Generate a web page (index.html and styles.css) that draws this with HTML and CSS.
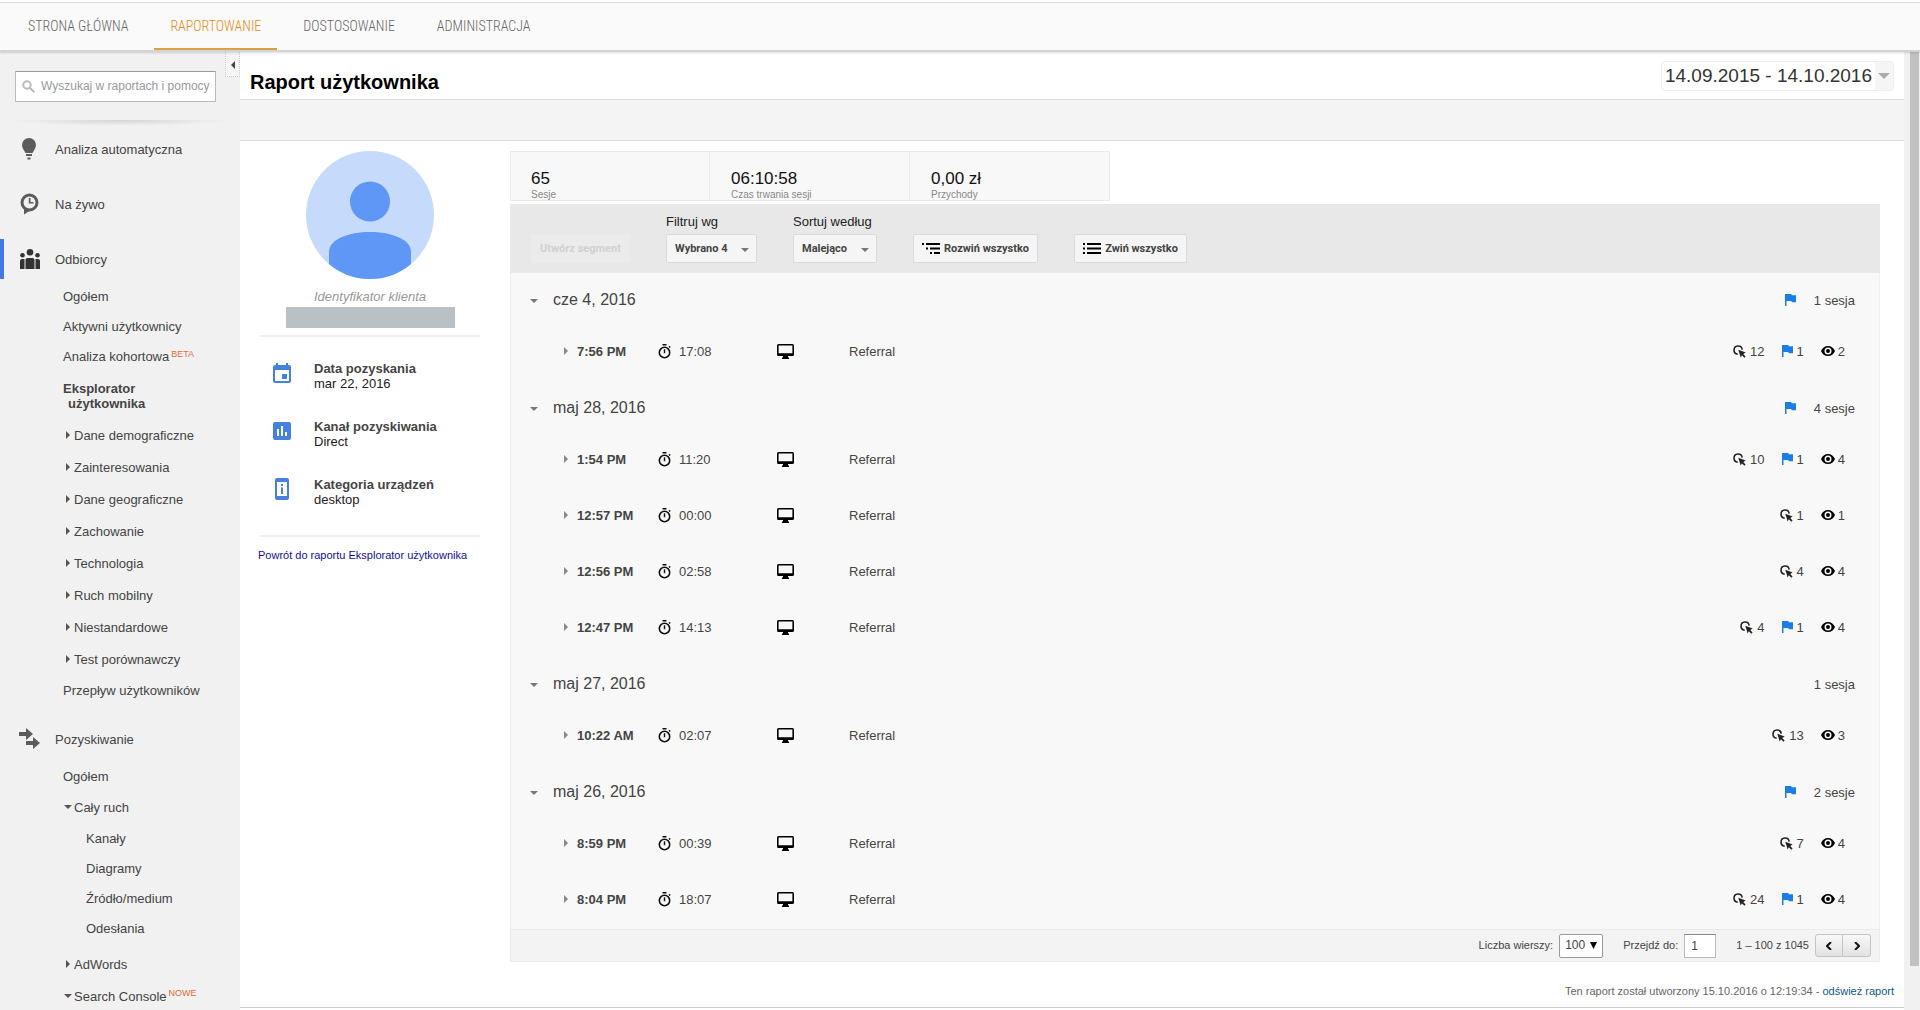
FILE: index.html
```html
<!DOCTYPE html>
<html lang="pl">
<head>
<meta charset="utf-8">
<title>Raport użytkownika</title>
<link rel="stylesheet" href="styles.css">
</head>
<body>
<svg class="sprite" aria-hidden="true">
  <symbol id="right" viewBox="0 0 4 8"><path d="M0 0l4 4-4 4z"/></symbol>
  <symbol id="down" viewBox="0 0 8 4"><path d="M0 0h8L4 4z"/></symbol>
  <symbol id="watch" viewBox="0 0 13 15"><path d="M4.500 0h4v1.500h-4z"/><circle cx="6.500" cy="8.500" r="5.200" fill="none" stroke="currentColor" stroke-width="1.600"/><path d="M5.800 5.200h1.400v4H5.800zM10.500 2.700l1-1 1.200 1.200-1 1z"/></symbol>
  <symbol id="monitor" viewBox="0 0 17 15"><path d="M1.500 0h14A1.500 1.500 0 0 1 17 1.500v9a1.500 1.500 0 0 1-1.500 1.500H11v1.500h1V15H5v-1.500h1V12H1.500A1.500 1.500 0 0 1 0 10.500v-9A1.500 1.500 0 0 1 1.500 0zm.1 1.500v7.700h13.800V1.500z" fill-rule="evenodd"/></symbol>
  <symbol id="click" viewBox="0 0 13 13"><path d="M4.700 9.200A4.100 4.100 0 1 1 9.200 4.600" fill="none" stroke="currentColor" stroke-width="1.600"/><path d="M5.300 4.800l7.400 2.700-2.500 1.400 2.400 2.600-1.200 1.200-2.500-2.500-1.200 2.400z"/></symbol>
  <symbol id="flag" viewBox="0 0 11 12"><path d="M0 0h6.300l.4 1.300H11v7H6.700L6.300 7H1.500v5H0z"/></symbol>
  <symbol id="eye" viewBox="0 0 14 10"><path d="M7 0c3.200 0 5.900 2 7 5-1.100 3-3.800 5-7 5S1.100 8 0 5c1.100-3 3.800-5 7-5zm0 1.500a3.500 3.500 0 1 0 0 7 3.500 3.500 0 0 0 0-7zM7 3a2 2 0 1 1 0 4 2 2 0 0 1 0-4z" fill-rule="evenodd"/></symbol>
</svg>

<header class="topbar">
  <nav class="tabs">
    <a href="#" class="tab">STRONA GŁÓWNA</a>
    <a href="#" class="tab tab-active">RAPORTOWANIE</a>
    <a href="#" class="tab">DOSTOSOWANIE</a>
    <a href="#" class="tab">ADMINISTRACJA</a>
  </nav>
</header>

<div class="app">
  <aside class="sidebar">
    <button class="collapse" aria-label="Zwiń menu"><svg width="4" height="8" viewBox="0 0 4 8"><path d="M4 0v8L0 4z"/></svg></button>
    <label class="search">
      <svg class="lens" width="13" height="13" viewBox="0 0 13 13"><circle cx="5" cy="5" r="3.700"/><path d="M8 8l4.300 4.300"/></svg>
      <input type="text" placeholder="Wyszukaj w raportach i pomocy" aria-label="Wyszukaj">
    </label>
    <div class="divider"></div>
    <nav class="menu">
      <a href="#" class="section"><svg width="28" height="22" viewBox="0 0 28 22"><path d="M14 0a7 7 0 0 1 7 7c0 3-2 5-3.500 8h-7C9 12 7 10 7 7a7 7 0 0 1 7-7zM11 16h6v2h-6zM12.500 19.500h3v2h-3z"/></svg>Analiza automatyczna</a>
      <a href="#" class="section"><svg width="28" height="22" viewBox="0 0 28 22"><circle cx="14.500" cy="9.500" r="7.500" fill="none" stroke="currentColor" stroke-width="3"/><path d="M9 15v6.500l7-4.500zM13.800 5h1.700v4h3v1.500h-4.700z"/></svg>Na żywo</a>
      <a href="#" class="section section-active"><svg width="28" height="20" viewBox="0 0 28 20"><circle cx="15" cy="3.300" r="3.300"/><circle cx="7.500" cy="6.200" r="2.300"/><circle cx="22.500" cy="6.200" r="2.300"/><path d="M10.500 20v-9q0-2 2-2h5q2 0 2 2v9zM5 20v-8q0-2 2-2h2.500v10zM20.500 20V10H23q2 0 2 2v8z"/></svg>Odbiorcy</a>
      <ul class="items">
        <li><a href="#">Ogółem</a></li>
        <li><a href="#">Aktywni użytkownicy</a></li>
        <li><a href="#">Analiza kohortowa<sup>BETA</sup></a></li>
        <li class="current"><a href="#">Eksplorator użytkownika</a></li>
        <li class="group"><a href="#"><svg class="arrow-right"><use href="#right"/></svg>Dane demograficzne</a></li>
        <li class="group"><a href="#"><svg class="arrow-right"><use href="#right"/></svg>Zainteresowania</a></li>
        <li class="group"><a href="#"><svg class="arrow-right"><use href="#right"/></svg>Dane geograficzne</a></li>
        <li class="group"><a href="#"><svg class="arrow-right"><use href="#right"/></svg>Zachowanie</a></li>
        <li class="group"><a href="#"><svg class="arrow-right"><use href="#right"/></svg>Technologia</a></li>
        <li class="group"><a href="#"><svg class="arrow-right"><use href="#right"/></svg>Ruch mobilny</a></li>
        <li class="group"><a href="#"><svg class="arrow-right"><use href="#right"/></svg>Niestandardowe</a></li>
        <li class="group"><a href="#"><svg class="arrow-right"><use href="#right"/></svg>Test porównawczy</a></li>
        <li><a href="#">Przepływ użytkowników</a></li>
      </ul>
      <a href="#" class="section"><svg width="28" height="22" viewBox="0 0 28 22"><path d="M4 4h7V0l7 6-7 6V8H4zM11 13h7V9l7 6-7 6v-4h-7z"/></svg>Pozyskiwanie</a>
      <ul class="items">
        <li><a href="#">Ogółem</a></li>
        <li class="group"><a href="#"><svg class="arrow-down"><use href="#down"/></svg>Cały ruch</a>
          <ul class="nest">
            <li><a href="#">Kanały</a></li>
            <li><a href="#">Diagramy</a></li>
            <li><a href="#">Źródło/medium</a></li>
            <li><a href="#">Odesłania</a></li>
          </ul>
        </li>
        <li class="group"><a href="#"><svg class="arrow-right"><use href="#right"/></svg>AdWords</a></li>
        <li class="group"><a href="#"><svg class="arrow-down"><use href="#down"/></svg>Search Console<sup>NOWE</sup></a></li>
      </ul>
    </nav>
  </aside>

  <main class="main">
    <div class="titlebar">
      <h1>Raport użytkownika</h1>
      <button class="daterange"><span>14.09.2015 - 14.10.2016</span><span class="datecaret"><svg width="12" height="6"><use href="#down"/></svg></span></button>
    </div>
    <div class="band"></div>

    <div class="report">
      <section class="profile">
        <svg class="avatar" viewBox="0 0 128 128"><defs><clipPath id="disc"><circle cx="64" cy="64" r="64"/></clipPath></defs><g clip-path="url(#disc)"><path fill="#c6dafc" d="M0 0h128v128H0z"/><circle cx="64" cy="50.500" r="20" fill="#5e97f6"/><path fill="#5e97f6" d="M23 128V101c0-13 20-20 41-20s41 7 41 20v27z"/></g></svg>
        <p class="client">Identyfikator klienta</p>
        <div class="redacted"></div>
        <dl class="facts">
          <div class="fact"><svg width="18" height="20" viewBox="0 0 18 20"><path fill-rule="evenodd" d="M3 0h2v2h8V0h2v2h1a2 2 0 0 1 2 2v14a2 2 0 0 1-2 2H2a2 2 0 0 1-2-2V4a2 2 0 0 1 2-2h1zM2 7v11h14V7zm7 4h5v5H9z"/></svg><div><dt>Data pozyskania</dt><dd>mar 22, 2016</dd></div></div>
          <div class="fact"><svg width="18" height="20" viewBox="0 0 18 20"><path fill-rule="evenodd" d="M2 1h14a2 2 0 0 1 2 2v14a2 2 0 0 1-2 2H2a2 2 0 0 1-2-2V3a2 2 0 0 1 2-2zm2 7v7h2V8zm4-3v10h2V5zm4 6v4h2v-4z"/></svg><div><dt>Kanał pozyskiwania</dt><dd>Direct</dd></div></div>
          <div class="fact"><svg width="18" height="22" viewBox="0 0 18 22"><path fill-rule="evenodd" d="M4 0h10a2 2 0 0 1 2 2v18a2 2 0 0 1-2 2H4a2 2 0 0 1-2-2V2a2 2 0 0 1 2-2zm0 4v14h10V4zm4 2h2v2H8zm0 3.500h2V16H8z"/></svg><div><dt>Kategoria urządzeń</dt><dd>desktop</dd></div></div>
        </dl>
        <a href="#" class="back">Powrót do raportu Eksplorator użytkownika</a>
      </section>

      <section class="activity">
        <div class="cards">
          <div class="card"><b>65</b><span>Sesje</span></div>
          <div class="card"><b>06:10:58</b><span>Czas trwania sesji</span></div>
          <div class="card"><b>0,00 zł</b><span>Przychody</span></div>
        </div>
        <div class="toolbar">
          <button class="btn segment" disabled>Utwórz segment</button>
          <div class="field filter"><label for="filter">Filtruj wg</label><div class="pick"><select id="filter"><option>Wybrano 4</option></select><svg width="8" height="4"><use href="#down"/></svg></div></div>
          <div class="field sort"><label for="sort">Sortuj według</label><div class="pick"><select id="sort"><option>Malejąco</option></select><svg width="8" height="4"><use href="#down"/></svg></div></div>
          <button class="btn expand"><svg width="18" height="11" viewBox="0 0 18 11"><path d="M0 0h2v2H0zM4 0h14v2H4zM4 4.500h2v2H4zM8 4.500h10v2H8zM8 9h2v2H8zM12 9h6v2h-6z"/></svg>Rozwiń wszystko</button>
          <button class="btn fold"><svg width="18" height="11" viewBox="0 0 18 11"><path d="M0 0h2v2H0zM4 0h14v2H4zM0 4.500h2v2H0zM4 4.500h14v2H4zM0 9h2v2H0zM4 9h14v2H4z"/></svg>Zwiń wszystko</button>
        </div>
        <table class="sessions">
          <colgroup><col class="c-time"><col class="c-length"><col class="c-device"><col class="c-channel"><col></colgroup>
          <tbody>
            <tr class="day"><th colspan="4"><svg class="arrow-down"><use href="#down"/></svg>cze 4, 2016</th><td><div class="count"><svg class="flag"><use href="#flag"/></svg>1 sesja</div></td></tr>
            <tr><th><svg class="arrow-right"><use href="#right"/></svg>7:56 PM</th><td><div class="length"><svg class="watch"><use href="#watch"/></svg>17:08</div></td><td><svg class="monitor"><use href="#monitor"/></svg></td><td>Referral</td><td><div class="stats"><span><svg class="click"><use href="#click"/></svg>12</span><span><svg class="flag"><use href="#flag"/></svg>1</span><span><svg class="eye"><use href="#eye"/></svg>2</span></div></td></tr>
          </tbody>
          <tbody>
            <tr class="day"><th colspan="4"><svg class="arrow-down"><use href="#down"/></svg>maj 28, 2016</th><td><div class="count"><svg class="flag"><use href="#flag"/></svg>4 sesje</div></td></tr>
            <tr><th><svg class="arrow-right"><use href="#right"/></svg>1:54 PM</th><td><div class="length"><svg class="watch"><use href="#watch"/></svg>11:20</div></td><td><svg class="monitor"><use href="#monitor"/></svg></td><td>Referral</td><td><div class="stats"><span><svg class="click"><use href="#click"/></svg>10</span><span><svg class="flag"><use href="#flag"/></svg>1</span><span><svg class="eye"><use href="#eye"/></svg>4</span></div></td></tr>
            <tr><th><svg class="arrow-right"><use href="#right"/></svg>12:57 PM</th><td><div class="length"><svg class="watch"><use href="#watch"/></svg>00:00</div></td><td><svg class="monitor"><use href="#monitor"/></svg></td><td>Referral</td><td><div class="stats"><span><svg class="click"><use href="#click"/></svg>1</span><span><svg class="eye"><use href="#eye"/></svg>1</span></div></td></tr>
            <tr><th><svg class="arrow-right"><use href="#right"/></svg>12:56 PM</th><td><div class="length"><svg class="watch"><use href="#watch"/></svg>02:58</div></td><td><svg class="monitor"><use href="#monitor"/></svg></td><td>Referral</td><td><div class="stats"><span><svg class="click"><use href="#click"/></svg>4</span><span><svg class="eye"><use href="#eye"/></svg>4</span></div></td></tr>
            <tr><th><svg class="arrow-right"><use href="#right"/></svg>12:47 PM</th><td><div class="length"><svg class="watch"><use href="#watch"/></svg>14:13</div></td><td><svg class="monitor"><use href="#monitor"/></svg></td><td>Referral</td><td><div class="stats"><span><svg class="click"><use href="#click"/></svg>4</span><span><svg class="flag"><use href="#flag"/></svg>1</span><span><svg class="eye"><use href="#eye"/></svg>4</span></div></td></tr>
          </tbody>
          <tbody>
            <tr class="day"><th colspan="4"><svg class="arrow-down"><use href="#down"/></svg>maj 27, 2016</th><td><div class="count">1 sesja</div></td></tr>
            <tr><th><svg class="arrow-right"><use href="#right"/></svg>10:22 AM</th><td><div class="length"><svg class="watch"><use href="#watch"/></svg>02:07</div></td><td><svg class="monitor"><use href="#monitor"/></svg></td><td>Referral</td><td><div class="stats"><span><svg class="click"><use href="#click"/></svg>13</span><span><svg class="eye"><use href="#eye"/></svg>3</span></div></td></tr>
          </tbody>
          <tbody>
            <tr class="day"><th colspan="4"><svg class="arrow-down"><use href="#down"/></svg>maj 26, 2016</th><td><div class="count"><svg class="flag"><use href="#flag"/></svg>2 sesje</div></td></tr>
            <tr><th><svg class="arrow-right"><use href="#right"/></svg>8:59 PM</th><td><div class="length"><svg class="watch"><use href="#watch"/></svg>00:39</div></td><td><svg class="monitor"><use href="#monitor"/></svg></td><td>Referral</td><td><div class="stats"><span><svg class="click"><use href="#click"/></svg>7</span><span><svg class="eye"><use href="#eye"/></svg>4</span></div></td></tr>
            <tr><th><svg class="arrow-right"><use href="#right"/></svg>8:04 PM</th><td><div class="length"><svg class="watch"><use href="#watch"/></svg>18:07</div></td><td><svg class="monitor"><use href="#monitor"/></svg></td><td>Referral</td><td><div class="stats"><span><svg class="click"><use href="#click"/></svg>24</span><span><svg class="flag"><use href="#flag"/></svg>1</span><span><svg class="eye"><use href="#eye"/></svg>4</span></div></td></tr>
          </tbody>
        </table>
        <div class="pager">
          <label for="rows">Liczba wierszy:</label>
          <div class="rows"><select id="rows"><option>100</option></select><svg width="7" height="7" viewBox="0 0 7 7"><path d="M0 0h7L3.500 7z"/></svg></div>
          <label for="goto">Przejdź do:</label>
          <input id="goto" type="text" value="1">
          <span class="range">1 – 100 z 1045</span>
          <div class="steps">
            <button aria-label="Poprzednia"><svg width="6" height="8" viewBox="0 0 6 8"><path d="M5 0L1 4l4 4" fill="none" stroke="#111" stroke-width="2"/></svg></button>
            <button aria-label="Następna"><svg width="6" height="8" viewBox="0 0 6 8"><path d="M1 0l4 4-4 4" fill="none" stroke="#111" stroke-width="2"/></svg></button>
          </div>
        </div>
      </section>
    </div>
    <footer class="foot">Ten raport został utworzony 15.10.2016 o 12:19:34 - <a href="#">odśwież raport</a></footer>
  </main>
  <div class="scroll"><div class="thumb"></div></div>
</div>
</body>
</html>
```
FILE: styles.css
```css
* { box-sizing: border-box; }
body {
  margin: 0;
  height: 100vh;
  overflow: hidden;
  display: flex;
  flex-direction: column;
  padding-top: 2px;
  background: #fff;
  color: #444;
  font: 13px/15px "Liberation Sans", Arial, sans-serif;
}
a { color: inherit; text-decoration: none; }
ul, dl, dd, p, h1 { margin: 0; padding: 0; }
ul { list-style: none; }
button, input, select { font: inherit; color: inherit; margin: 0; }
svg { fill: currentColor; flex: none; }
.sprite { position: absolute; width: 0; height: 0; }
.arrow-right { width: 4px; height: 8px; color: #555; }
.arrow-down { width: 8px; height: 4px; color: #555; }

.topbar {
  flex: none;
  z-index: 1;
  height: 50px;
  padding-left: 12px;
  background: #fafafa;
  border-top: 1px solid #ddd;
  border-bottom: 2px solid #d4d4d4;
  box-shadow: 0 1px 2px rgba(0, 0, 0, .15);
}
.tabs { display: flex; gap: 10px; height: 100%; }
.tab {
  display: flex;
  align-items: center;
  padding: 0 16px;
  border-bottom: 2px solid transparent;
  color: #666;
  font: 300 14px/16px "Roboto Condensed", "Liberation Sans Narrow", Roboto, sans-serif;
}
.tab-active { color: #e98a15; border-color: #d9a04a; }

.app { flex: 1; min-height: 0; display: flex; }

.sidebar {
  position: relative;
  flex: none;
  width: 240px;
  overflow: hidden;
  padding-top: 19px;
  background: #f1f1f1;
}
.collapse {
  position: absolute;
  top: 0;
  right: 0;
  width: 15px;
  height: 25px;
  padding: 0;
  border: 1px dotted #ccc;
  border-top: 0;
  background: #f5f5f5;
  color: #444;
}
.search {
  display: flex;
  align-items: center;
  gap: 6px;
  height: 31px;
  margin: 0 24px 0 15px;
  padding-left: 6px;
  background: #fff;
  border: 1px solid #bbb;
  border-top-color: #999;
}
.lens { fill: none; stroke: #bbb; stroke-width: 2; }
.search input {
  flex: 1;
  min-width: 0;
  padding: 0;
  border: 0;
  outline: 0;
  background: none;
  font-size: 12px;
}
.search input::placeholder { color: #999; }
.divider {
  height: 6px;
  margin: 18px 8px 0;
  background: radial-gradient(ellipse at top, #d4d4d4, #f1f1f1 70%);
}
.menu { padding-top: 3px; }
.section {
  display: flex;
  align-items: center;
  gap: 12px;
  height: 40px;
  margin-bottom: 15px;
  padding-left: 15px;
}
.section svg { color: #5c5c5c; }
.section-active { padding-left: 11px; border-left: 4px solid #4279e2; }
.section-active svg { color: #333; }
.section:has(+ .items) { margin-bottom: 2px; }
.items { padding: 0 0 14px 63px; }
.items a { display: flex; align-items: center; height: 30px; }
.items .group > a { height: 32px; margin-left: -1px; }
.items .arrow-right { margin: 0 4px; }
.items .arrow-down { margin: 0 2px; }
.items .current a {
  display: block;
  width: 100px;
  height: 48px;
  padding: 10px 0 8px 5px;
  text-indent: -5px;
  font-weight: bold;
}
.nest { padding: 0 0 5px 23px; }
sup {
  align-self: flex-start;
  margin: 7px 0 0 2px;
  color: #dd6b3a;
  font-size: 9px;
  line-height: 12px;
}

.main { flex: 1; min-width: 0; border-bottom: 1px solid #ccc; margin-bottom: 2px; }
.titlebar {
  display: flex;
  align-items: center;
  justify-content: space-between;
  height: 48px;
  padding: 0 10px;
  border-bottom: 1px solid #ddd;
}
h1 { padding-top: 12px; color: #000; font-size: 20px; line-height: 24px; }
.daterange {
  display: flex;
  height: 30px;
  padding: 0;
  border: 1px solid #eee;
  border-radius: 4px;
  background: #fff;
  color: #333;
  font-size: 19px;
  line-height: 28px;
}
.daterange span:first-child { padding: 0 3px; }
.datecaret { display: flex; align-items: center; padding: 0 3px; background: #f5f5f5; color: #aaa; }
.band { height: 41px; background: #f4f4f4; border-bottom: 1px solid #ddd; }

.report { display: flex; padding: 10px 24px 0 0; }
.profile {
  flex: none;
  width: 270px;
  padding: 0 30px 0 18px;
  display: flex;
  flex-direction: column;
}
.avatar { width: 128px; height: 128px; margin-left: 48px; }
.client { margin: 10px 0 3px; padding-left: 2px; text-align: center; color: #999; font-style: italic; }
.redacted { width: 169px; height: 21px; margin-left: 28px; background: #bac1c5; }
.facts {
  margin: 7px 0 12px 2px;
  padding: 24px 0 21px 13px;
  border: solid #eee;
  border-width: 2px 0;
}
.fact { display: flex; gap: 23px; align-items: center; height: 30px; margin-bottom: 28px; color: #4582e0; }
.fact:last-child { margin-bottom: 7px; }
.fact svg { margin-bottom: 6px; }
dt { color: #444; font-weight: bold; }
dd { color: #222; }
.back { color: #11119c; font-size: 11px; line-height: 13px; }

.activity { flex: 1; min-width: 0; }
.cards { display: flex; margin-bottom: 3px; }
.card {
  width: 200px;
  height: 50px;
  padding: 17px 0 0 20px;
  background: #f8f8f8;
  border: 1px solid #eaeaea;
  color: #111;
}
.card + .card { border-left: 0; padding-left: 21px; }
.card b { display: block; font-size: 17px; line-height: 20px; font-weight: normal; }
.card span { display: block; color: #888; font-size: 10px; line-height: 12px; }
.toolbar {
  display: flex;
  align-items: flex-end;
  height: 69px;
  padding: 0 21px 10px;
  background: #e8e8e8;
}
.btn, .pick select {
  height: 29px;
  border: 1px solid #dadada;
  border-radius: 2px;
  background: #f5f5f5;
  color: #444;
  font: bold 11px/14px Roboto, "Liberation Sans", sans-serif;
}
.btn { display: flex; align-items: center; justify-content: center; gap: 4px; padding: 0; }
.btn svg { color: #000; }
.segment { width: 99px; border-color: #ebebeb; background: #ebebeb; color: #d0d0d0; }
.filter { width: 91px; margin-left: 36px; }
.sort { width: 84px; margin-left: 36px; }
.expand { width: 125px; margin-left: 36px; }
.fold { width: 113px; margin-left: 36px; }
.field { color: #222; white-space: nowrap; }
.field label { display: block; margin-bottom: 5px; }
.pick { position: relative; }
.pick select, .rows select { appearance: none; width: 100%; display: block; }
.pick select { padding: 0 8px; }
.pick svg { position: absolute; right: 8px; top: 14px; color: #777; pointer-events: none; }

.sessions {
  width: 100%;
  table-layout: fixed;
  border-collapse: collapse;
  background: #f8f8f8;
  box-shadow: inset 1px 0 #eee, inset -1px 0 #eee;
}
.c-time { width: 148px; }
.c-length { width: 119px; }
.c-device { width: 72px; }
.c-channel { width: 200px; }
.sessions th, .sessions td { height: 56px; padding: 0 0 4px; text-align: left; vertical-align: middle; }
.sessions svg { vertical-align: middle; }
.sessions .arrow-right { margin: 0 9px 2px 54px; color: #888; }
.sessions .day th, .sessions .day td { height: 52px; padding: 2px 0 0; }
.sessions .day th { font-size: 16px; line-height: 18px; font-weight: normal; }
.sessions .day .arrow-down { margin: 0 15px 0 20px; color: #777; }
.length { display: flex; align-items: center; gap: 8px; }
.watch { width: 13px; height: 15px; color: #111; }
.monitor { width: 17px; height: 15px; color: #000; }
.count, .stats { display: flex; justify-content: flex-end; align-items: center; padding-right: 25px; }
.count { gap: 18px; }
.stats { padding-right: 35px; gap: 17px; }
.stats span { display: flex; align-items: center; gap: 4px; }
.click { width: 13px; height: 13px; color: #222; }
.flag { width: 11px; height: 12px; color: #1a7ee6; }
.eye { width: 14px; height: 10px; color: #000; }
.stats span:last-child { gap: 3px; }

.pager {
  display: flex;
  align-items: center;
  justify-content: flex-end;
  height: 33px;
  padding-right: 8px;
  background: #f3f3f3;
  border: 1px solid #ebebeb;
  font-size: 11px;
}
.rows { position: relative; width: 44px; margin: 0 20px 0 6px; }
.rows select {
  height: 24px;
  padding: 0 0 0 5px;
  border: 1px solid #999;
  border-radius: 2px;
  background: #fff;
  font-size: 12px;
}
.rows svg { position: absolute; right: 6px; top: 8px; color: #000; pointer-events: none; }
.pager input {
  width: 32px;
  height: 24px;
  margin: 0 20px 0 6px;
  padding: 0 6px;
  border: 1px solid #bbb;
  border-top-color: #888;
  font-size: 12px;
}
.steps { display: flex; margin-left: 6px; }
.steps button {
  display: flex;
  align-items: center;
  justify-content: center;
  width: 28px;
  height: 23px;
  border: 1px solid #c4c4c4;
  border-radius: 3px 0 0 3px;
  background: linear-gradient(#f8f8f8, #e2e2e2);
}
.steps button + button { border-left: 0; border-radius: 0 3px 3px 0; }
.foot { padding: 22px 10px 0; text-align: right; color: #666; font-size: 11px; }
.foot a { color: #125688; }

.scroll { flex: none; width: 16px; padding: 0 1px 44px 6px; background: #f1f1f1; }
.thumb { height: 100%; background: #c1c1c1; }
```
